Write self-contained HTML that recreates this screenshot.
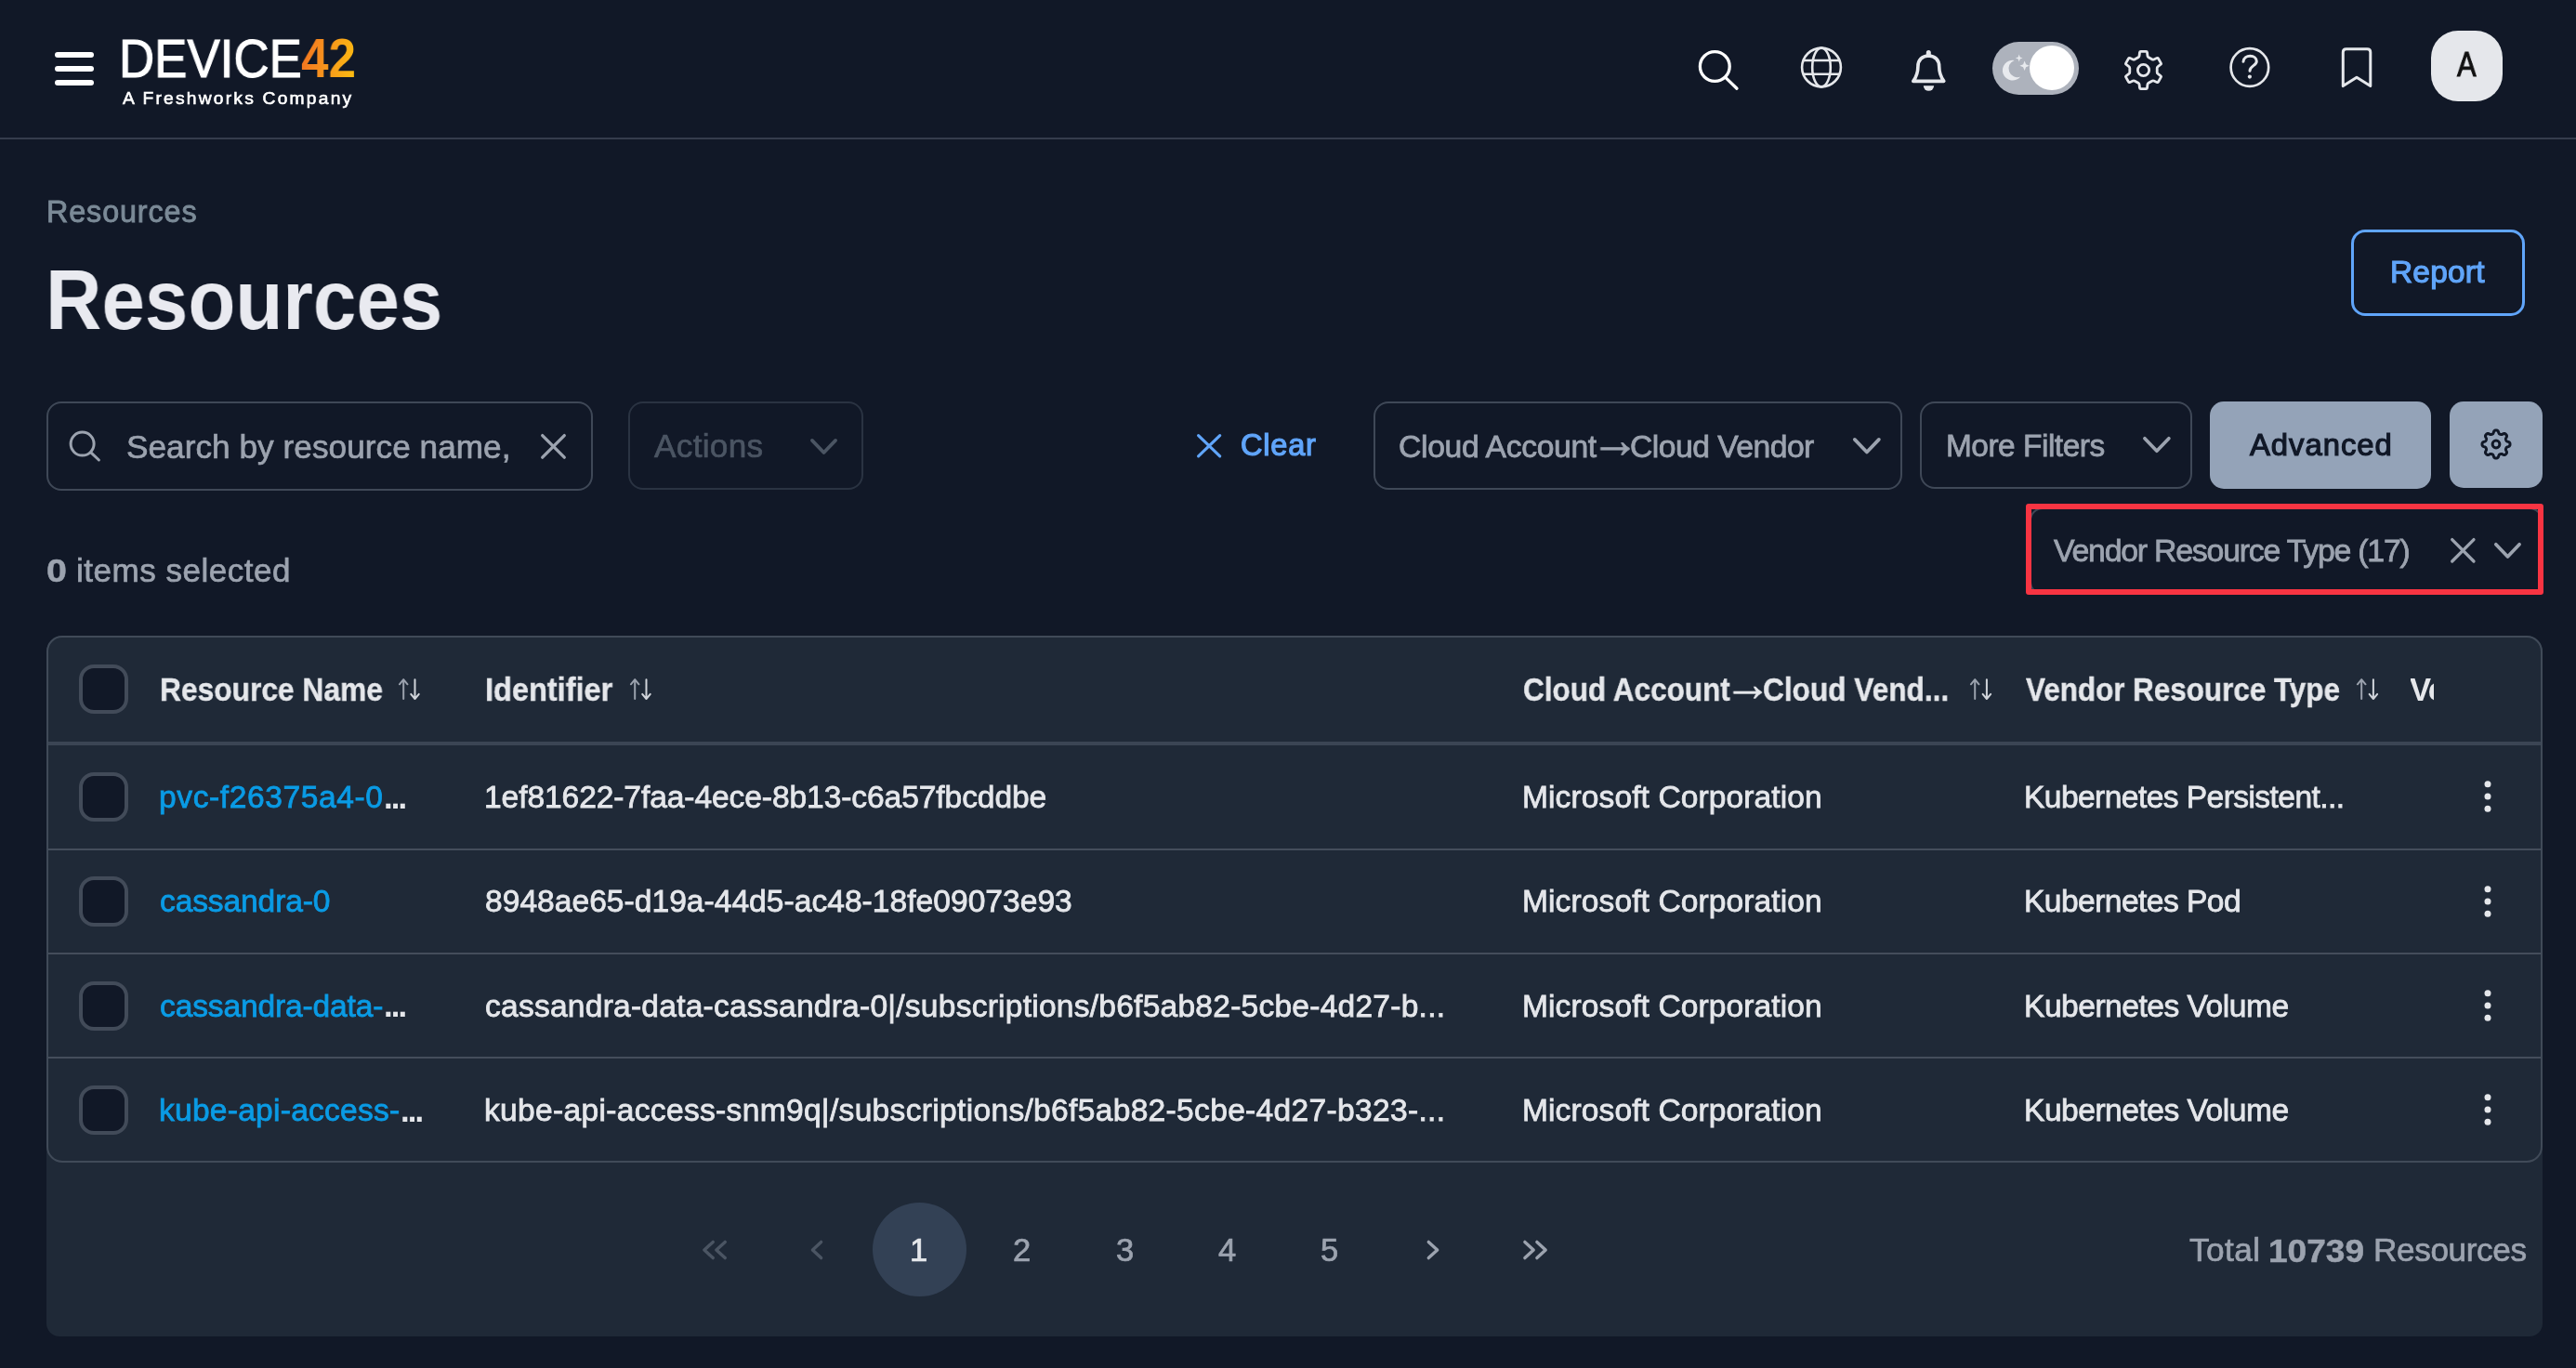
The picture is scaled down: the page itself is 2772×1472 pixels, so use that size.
<!DOCTYPE html>
<html lang="en"><head><meta charset="utf-8"><title>Resources - Device42</title>
<style>
*{box-sizing:border-box;margin:0;padding:0}
html,body{width:2772px;height:1472px;overflow:hidden;background:#111827}
body{position:relative;font-family:"Liberation Sans",Arial,Helvetica,sans-serif;color:#e5e7eb}
span,div,svg,a{position:absolute}
span{white-space:nowrap;display:block;transform-origin:0 50%;will-change:transform}
svg{overflow:visible}
.box{border:2px solid #3f4857;border-radius:16px}
.cb{width:53.2px;height:53.2px;border:4px solid #424b59;border-radius:16px;background:#111827}
.grad{background:linear-gradient(100deg,#f26f21 0%,#f7941d 45%,#fdc010 100%);-webkit-background-clip:text;background-clip:text;color:transparent !important}
.hl{height:2.1px;background:#444d5b;left:52px;width:2682px}
</style></head><body>

<div id="hdr" style="left:0;top:0;width:2772px;height:150px;border-bottom:2px solid #353c4c"></div>
<div style="left:59.2px;top:55.8px;width:41.8px;height:6px;border-radius:3px;background:#fff"></div>
<div style="left:59.2px;top:70.9px;width:41.8px;height:6px;border-radius:3px;background:#fff"></div>
<div style="left:59.2px;top:86.0px;width:41.8px;height:6px;border-radius:3px;background:#fff"></div>
<svg style="left:1820.0px;top:46.0px" width="60.0" height="60.0" viewBox="1820.0 46.0 60.0 60.0" fill="none" stroke="#fff" stroke-width="3.3" stroke-linecap="round"><circle cx="1845.3" cy="71.5" r="15.9"/><path d="M1857 83.6 L1869 95.2"/></svg>
<svg style="left:1930.0px;top:42.0px" width="60.0" height="60.0" viewBox="1930.0 42.0 60.0 60.0" fill="none" stroke="#e5e7eb" stroke-width="2.6"><circle cx="1960" cy="72.5" r="20.9"/><ellipse cx="1960" cy="72.5" rx="9.8" ry="20.9"/><path d="M1940.6 65 H1979.4 M1940.6 79.7 H1979.4"/></svg>
<svg style="left:2050.0px;top:48.0px" width="52.0" height="56.0" viewBox="2050.0 48.0 52.0 56.0" fill="none" stroke="#e5e7eb" stroke-width="3.6" stroke-linejoin="round" stroke-linecap="round"><path d="M2058.8 87.4 C2062.3 82.6 2063.9 78 2063.9 71.5 C2063.9 64.5 2068.5 60 2075.3 60 C2082.1 60 2086.7 64.5 2086.7 71.5 C2086.7 78 2088.3 82.6 2091.8 87.4 Z"/><path d="M2075.3 56.4 V59.5" stroke-width="5"/><path d="M2069.8 92.2 H2081.1 A5.65 5.65 0 0 1 2069.8 92.2 Z" fill="#e5e7eb" stroke="none"/></svg>
<div style="left:2144.3px;top:45.2px;width:92.8px;height:56.8px;border-radius:28.4px;background:#adb2bc"></div>
<div style="left:2184px;top:49px;width:48px;height:48px;border-radius:24px;background:#fff"></div>
<svg style="left:2150.0px;top:56.0px" width="36.0" height="36.0" viewBox="2150.0 56.0 36.0 36.0" fill="#e8eaee"><path d="M2167.6 64.9 A10.9 10.9 0 1 0 2174.2 82.6 A9.4 9.4 0 0 1 2167.6 64.9 Z"/><path d="M2172.7 58.6 l1 2.9 2.9 1 -2.9 1 -1 2.9 -1 -2.9 -2.9 -1 2.9 -1 Z"/><path d="M2178.6 65.5 l1.5 3.7 3.7 1.5 -3.7 1.5 -1.5 3.7 -1.5 -3.7 -3.7 -1.5 3.7 -1.5 Z"/></svg>
<svg style="left:2281.5px;top:51.3px" width="49.0" height="49.0" viewBox="2281.5 51.3 49.0 49.0" fill="none" stroke="#e5e7eb" stroke-width="2.8" stroke-linejoin="round"><path d="M2300.49 61.99 Q2301.47 61.43 2301.59 60.31 L2301.97 56.80 Q2302.09 55.68 2303.22 55.68 L2308.78 55.68 Q2309.91 55.68 2310.03 56.80 L2310.41 60.31 Q2310.53 61.43 2311.51 61.99 L2315.20 64.13 Q2316.18 64.69 2317.21 64.24 L2320.44 62.81 Q2321.47 62.35 2322.04 63.33 L2324.82 68.15 Q2325.38 69.13 2324.47 69.79 L2321.62 71.87 Q2320.71 72.54 2320.71 73.67 L2320.71 77.93 Q2320.71 79.06 2321.62 79.73 L2324.47 81.81 Q2325.38 82.47 2324.82 83.45 L2322.04 88.27 Q2321.47 89.25 2320.44 88.79 L2317.21 87.36 Q2316.18 86.91 2315.20 87.47 L2311.51 89.61 Q2310.53 90.17 2310.41 91.29 L2310.03 94.80 Q2309.91 95.92 2308.78 95.92 L2303.22 95.92 Q2302.09 95.92 2301.97 94.80 L2301.59 91.29 Q2301.47 90.17 2300.49 89.61 L2296.80 87.47 Q2295.82 86.91 2294.79 87.36 L2291.56 88.79 Q2290.53 89.25 2289.96 88.27 L2287.18 83.45 Q2286.62 82.47 2287.53 81.81 L2290.38 79.73 Q2291.29 79.06 2291.29 77.93 L2291.29 73.67 Q2291.29 72.54 2290.38 71.87 L2287.53 69.79 Q2286.62 69.13 2287.18 68.15 L2289.96 63.33 Q2290.53 62.35 2291.56 62.81 L2294.79 64.24 Q2295.82 64.69 2296.80 64.13 Z"/><circle cx="2306" cy="75.8" r="6.15"/></svg>
<svg style="left:2395.0px;top:46.0px" width="52.0" height="52.0" viewBox="2395.0 46.0 52.0 52.0" fill="none" stroke="#e5e7eb" stroke-width="2.7" stroke-linecap="round" stroke-linejoin="round"><circle cx="2420.9" cy="72.5" r="20.3"/><path d="M2414 66.3 C2414.2 62 2418 60.2 2421.3 60.2 C2425.3 60.2 2428.3 62.6 2428.3 66 C2428.3 70.6 2421 70.8 2421 76.3" stroke-width="3"/><circle cx="2420.9" cy="82.6" r="2.1" fill="#e5e7eb" stroke="none"/></svg>
<svg style="left:2514.0px;top:46.0px" width="44.0" height="54.0" viewBox="2514.0 46.0 44.0 54.0" fill="none" stroke="#e5e7eb" stroke-width="3" stroke-linejoin="round"><path d="M2521.3 92.6 V56.3 Q2521.3 52.8 2524.8 52.8 H2547.3 Q2550.8 52.8 2550.8 56.3 V92.6 L2536 83.3 Z"/></svg>
<div style="left:2616px;top:33px;width:77px;height:76px;border-radius:29px;background:#e5e7eb"></div>
<div style="left:2529.8px;top:246.7px;width:187.4px;height:93.5px;border:3px solid #60a5fa;border-radius:15px"></div>
<div class="box" style="left:50px;top:432px;width:588px;height:96.3px"></div>
<svg style="left:70.0px;top:459.0px" width="44.0" height="44.0" viewBox="70.0 459.0 44.0 44.0" fill="none" stroke="#9ca3af" stroke-width="3" stroke-linecap="round"><circle cx="88.6" cy="477.6" r="12.5"/><path d="M97.8 486.8 L106.4 495"/></svg>
<svg style="left:579.1px;top:464.0px" width="32.9" height="32.8" viewBox="579.1 464.0 32.9 32.8" fill="none" stroke="#9ca3af" stroke-width="3.3" stroke-linecap="round"><path d="M583.8 468.6 L607.4 492.2 M607.4 468.6 L583.8 492.2"/></svg>
<div class="box" style="left:676.4px;top:432px;width:252.2px;height:95px;border-color:#2a3342"></div>
<svg style="left:869.0px;top:468.8px" width="35.0" height="22.8" viewBox="869.0 468.8 35.0 22.8" fill="none" stroke="#4b5563" stroke-width="3.7" stroke-linecap="round" stroke-linejoin="round"><path d="M873.9 473.7 L886.5 486.8 L899.1 473.7"/></svg>
<svg style="left:1285.0px;top:463.6px" width="32.3" height="31.4" viewBox="1285.0 463.6 32.3 31.4" fill="none" stroke="#60a5fa" stroke-width="3.2" stroke-linecap="round"><path d="M1289.6 468.2 L1312.7 490.4 M1312.7 468.2 L1289.6 490.4"/></svg>
<div class="box" style="left:1478.3px;top:432.4px;width:568.3px;height:94.7px"></div>
<svg style="left:1990.8px;top:468.1px" width="35.7" height="23.4" viewBox="1990.8 468.1 35.7 23.4" fill="none" stroke="#9ca3af" stroke-width="3.7" stroke-linecap="round" stroke-linejoin="round"><path d="M1995.6 473.0 L2008.7 486.6 L2021.7 473.0"/></svg>
<div class="box" style="left:2066px;top:432px;width:293.1px;height:93.7px"></div>
<svg style="left:2302.9px;top:467.4px" width="35.7" height="23.1" viewBox="2302.9 467.4 35.7 23.1" fill="none" stroke="#9ca3af" stroke-width="3.7" stroke-linecap="round" stroke-linejoin="round"><path d="M2307.8 472.2 L2320.8 485.6 L2333.8 472.2"/></svg>
<div style="left:2377.9px;top:432px;width:238.2px;height:94px;border-radius:15px;background:#94a3b8"></div>
<div style="left:2635.8px;top:432px;width:100.3px;height:93px;border-radius:15px;background:#94a3b8"></div>
<svg style="left:2667.0px;top:459.2px" width="38.0" height="38.0" viewBox="2667.0 459.2 38.0 38.0" fill="none" stroke="#111827" stroke-width="3.0" stroke-linejoin="round"><path d="M2686.00 463.20 L2686.49 463.22 L2686.98 463.30 L2687.45 463.47 L2687.90 463.80 L2688.28 464.36 L2688.59 465.16 L2688.86 465.95 L2689.13 466.54 L2689.43 466.91 L2689.75 467.15 L2690.09 467.33 L2690.44 467.48 L2690.79 467.62 L2691.16 467.73 L2691.56 467.79 L2692.04 467.74 L2692.64 467.52 L2693.39 467.14 L2694.17 466.80 L2694.84 466.68 L2695.39 466.76 L2695.84 466.98 L2696.24 467.26 L2696.61 467.59 L2696.94 467.96 L2697.22 468.36 L2697.44 468.81 L2697.52 469.36 L2697.40 470.03 L2697.06 470.81 L2696.68 471.56 L2696.46 472.16 L2696.41 472.64 L2696.47 473.04 L2696.58 473.41 L2696.72 473.76 L2696.87 474.11 L2697.05 474.45 L2697.29 474.77 L2697.66 475.07 L2698.25 475.34 L2699.04 475.61 L2699.84 475.92 L2700.40 476.30 L2700.73 476.75 L2700.90 477.22 L2700.98 477.71 L2701.00 478.20 L2700.98 478.69 L2700.90 479.18 L2700.73 479.65 L2700.40 480.10 L2699.84 480.48 L2699.04 480.79 L2698.25 481.06 L2697.66 481.33 L2697.29 481.63 L2697.05 481.95 L2696.87 482.29 L2696.72 482.64 L2696.58 482.99 L2696.47 483.36 L2696.41 483.76 L2696.46 484.24 L2696.68 484.84 L2697.06 485.59 L2697.40 486.37 L2697.52 487.04 L2697.44 487.59 L2697.22 488.04 L2696.94 488.44 L2696.61 488.81 L2696.24 489.14 L2695.84 489.42 L2695.39 489.64 L2694.84 489.72 L2694.17 489.60 L2693.39 489.26 L2692.64 488.88 L2692.04 488.66 L2691.56 488.61 L2691.16 488.67 L2690.79 488.78 L2690.44 488.92 L2690.09 489.07 L2689.75 489.25 L2689.43 489.49 L2689.13 489.86 L2688.86 490.45 L2688.59 491.24 L2688.28 492.04 L2687.90 492.60 L2687.45 492.93 L2686.98 493.10 L2686.49 493.18 L2686.00 493.20 L2685.51 493.18 L2685.02 493.10 L2684.55 492.93 L2684.10 492.60 L2683.72 492.04 L2683.41 491.24 L2683.14 490.45 L2682.87 489.86 L2682.57 489.49 L2682.25 489.25 L2681.91 489.07 L2681.56 488.92 L2681.21 488.78 L2680.84 488.67 L2680.44 488.61 L2679.96 488.66 L2679.36 488.88 L2678.61 489.26 L2677.83 489.60 L2677.16 489.72 L2676.61 489.64 L2676.16 489.42 L2675.76 489.14 L2675.39 488.81 L2675.06 488.44 L2674.78 488.04 L2674.56 487.59 L2674.48 487.04 L2674.60 486.37 L2674.94 485.59 L2675.32 484.84 L2675.54 484.24 L2675.59 483.76 L2675.53 483.36 L2675.42 482.99 L2675.28 482.64 L2675.13 482.29 L2674.95 481.95 L2674.71 481.63 L2674.34 481.33 L2673.75 481.06 L2672.96 480.79 L2672.16 480.48 L2671.60 480.10 L2671.27 479.65 L2671.10 479.18 L2671.02 478.69 L2671.00 478.20 L2671.02 477.71 L2671.10 477.22 L2671.27 476.75 L2671.60 476.30 L2672.16 475.92 L2672.96 475.61 L2673.75 475.34 L2674.34 475.07 L2674.71 474.77 L2674.95 474.45 L2675.13 474.11 L2675.28 473.76 L2675.42 473.41 L2675.53 473.04 L2675.59 472.64 L2675.54 472.16 L2675.32 471.56 L2674.94 470.81 L2674.60 470.03 L2674.48 469.36 L2674.56 468.81 L2674.78 468.36 L2675.06 467.96 L2675.39 467.59 L2675.76 467.26 L2676.16 466.98 L2676.61 466.76 L2677.16 466.68 L2677.83 466.80 L2678.61 467.14 L2679.36 467.52 L2679.96 467.74 L2680.44 467.79 L2680.84 467.73 L2681.21 467.62 L2681.56 467.48 L2681.91 467.33 L2682.25 467.15 L2682.57 466.91 L2682.87 466.54 L2683.14 465.95 L2683.41 465.16 L2683.72 464.36 L2684.10 463.80 L2684.55 463.47 L2685.02 463.30 L2685.51 463.22 Z"/><circle cx="2686" cy="478.2" r="3.9"/></svg>
<div class="box" style="left:2184.2px;top:545.6px;width:551.8px;height:94.4px;border-radius:14px"></div>
<div style="left:2180.3px;top:541.8px;width:556.9px;height:98.3px;border:6.4px solid #f83442;border-radius:3px"></div>
<svg style="left:2633.9px;top:576.0px" width="32.7" height="32.6" viewBox="2633.9 576.0 32.7 32.6" fill="none" stroke="#9ca3af" stroke-width="3.3" stroke-linecap="round"><path d="M2638.6 580.6 L2661.9 604.0 M2661.9 580.6 L2638.6 604.0"/></svg>
<svg style="left:2681.2px;top:581.4px" width="35.0" height="22.8" viewBox="2681.2 581.4 35.0 22.8" fill="none" stroke="#9ca3af" stroke-width="3.7" stroke-linecap="round" stroke-linejoin="round"><path d="M2686.0 586.2 L2698.7 599.4 L2711.3 586.2"/></svg>
<div style="left:50px;top:684px;width:2686px;height:753.5px;background:#1f2937;border-radius:17px 17px 14px 14px"></div>
<div style="left:50px;top:684px;width:2686px;height:567px;border:2px solid #404a58;border-radius:17px"></div>
<div style="left:52px;top:798.2px;width:2682px;height:3.8px;background:#3b4554"></div>
<div class="hl" style="top:912.9px"></div>
<div class="hl" style="top:1025.0px"></div>
<div class="hl" style="top:1137.1px"></div>
<div class="cb" style="left:84.9px;top:714.7px"></div>
<div class="cb" style="left:84.9px;top:831.0px"></div>
<div class="cb" style="left:84.9px;top:943.4px"></div>
<div class="cb" style="left:84.9px;top:1055.8px"></div>
<div class="cb" style="left:84.9px;top:1168.2px"></div>
<svg style="left:426.8px;top:728.4px" width="26.7" height="27.2" viewBox="426.8 728.4 26.7 27.2" fill="none" stroke-width="2" stroke-linecap="round" stroke-linejoin="round"><path d="M434.0 752.4 V731.6 M429.7 736.7 L434.0 731.6 L438.3 736.7" stroke="#9aa1ad"/><path d="M446.3 731.6 V752.4 M442.0 747.3 L446.3 752.4 L450.6 747.3" stroke="#d1d5db"/></svg>
<svg style="left:675.6px;top:728.4px" width="26.7" height="27.2" viewBox="675.6 728.4 26.7 27.2" fill="none" stroke-width="2" stroke-linecap="round" stroke-linejoin="round"><path d="M682.8 752.4 V731.6 M678.5 736.7 L682.8 731.6 L687.1 736.7" stroke="#9aa1ad"/><path d="M695.1 731.6 V752.4 M690.8 747.3 L695.1 752.4 L699.4 747.3" stroke="#d1d5db"/></svg>
<svg style="left:2118.3px;top:728.4px" width="27.1" height="27.2" viewBox="2118.3 728.4 27.1 27.2" fill="none" stroke-width="2" stroke-linecap="round" stroke-linejoin="round"><path d="M2125.5 752.4 V731.6 M2121.2 736.7 L2125.5 731.6 L2129.8 736.7" stroke="#9aa1ad"/><path d="M2138.2 731.6 V752.4 M2133.9 747.3 L2138.2 752.4 L2142.5 747.3" stroke="#d1d5db"/></svg>
<svg style="left:2533.7px;top:728.4px" width="27.1" height="27.2" viewBox="2533.7 728.4 27.1 27.2" fill="none" stroke-width="2" stroke-linecap="round" stroke-linejoin="round"><path d="M2540.9 752.4 V731.6 M2536.6 736.7 L2540.9 731.6 L2545.2 736.7" stroke="#9aa1ad"/><path d="M2553.6 731.6 V752.4 M2549.3 747.3 L2553.6 752.4 L2557.9 747.3" stroke="#d1d5db"/></svg>
<svg style="left:2670.7px;top:839.2px" width="12.0" height="36.0" viewBox="2670.7 839.2 12.0 36.0" fill="#e5e7eb"><circle cx="2676.7" cy="843.9" r="3.5"/><circle cx="2676.7" cy="857.2" r="3.5"/><circle cx="2676.7" cy="870.5" r="3.5"/></svg>
<svg style="left:2670.7px;top:951.5px" width="12.0" height="36.0" viewBox="2670.7 951.5 12.0 36.0" fill="#e5e7eb"><circle cx="2676.7" cy="956.2" r="3.5"/><circle cx="2676.7" cy="969.5" r="3.5"/><circle cx="2676.7" cy="982.8" r="3.5"/></svg>
<svg style="left:2670.7px;top:1063.8px" width="12.0" height="36.0" viewBox="2670.7 1063.8 12.0 36.0" fill="#e5e7eb"><circle cx="2676.7" cy="1068.5" r="3.5"/><circle cx="2676.7" cy="1081.8" r="3.5"/><circle cx="2676.7" cy="1095.1" r="3.5"/></svg>
<svg style="left:2670.7px;top:1176.1px" width="12.0" height="36.0" viewBox="2670.7 1176.1 12.0 36.0" fill="#e5e7eb"><circle cx="2676.7" cy="1180.8" r="3.5"/><circle cx="2676.7" cy="1194.1" r="3.5"/><circle cx="2676.7" cy="1207.4" r="3.5"/></svg>
<div style="left:2594px;top:715px;width:25px;height:52px;overflow:hidden"><span style="left:-1.2px;top:9.7px;font-size:34.6px;line-height:34.6px;font-weight:700;color:#e5e7eb;letter-spacing:-1.4px">Vendor</span></div>
<div style="left:938.7px;top:1293.7px;width:101px;height:101px;border-radius:50%;background:#334155"></div>
<svg style="left:748.6px;top:1328.8px" width="40.0" height="32.0" viewBox="748.6 1328.8 40.0 32.0" fill="none" stroke="#4b5563" stroke-width="3.4" stroke-linecap="round" stroke-linejoin="round"><path d="M766.8 1336.2 L757.5 1344.8 L766.8 1353.4 M779.8 1336.2 L770.5 1344.8 L779.8 1353.4"/></svg>
<svg style="left:858.6px;top:1328.8px" width="40.0" height="32.0" viewBox="858.6 1328.8 40.0 32.0" fill="none" stroke="#4b5563" stroke-width="3.4" stroke-linecap="round" stroke-linejoin="round"><path d="M883.2 1336.2 L874.0 1344.8 L883.2 1353.4"/></svg>
<svg style="left:1521.8px;top:1328.8px" width="40.0" height="32.0" viewBox="1521.8 1328.8 40.0 32.0" fill="none" stroke="#9ca3af" stroke-width="3.4" stroke-linecap="round" stroke-linejoin="round"><path d="M1537.1 1336.2 L1546.5 1344.8 L1537.1 1353.4"/></svg>
<svg style="left:1631.9px;top:1328.8px" width="40.0" height="32.0" viewBox="1631.9 1328.8 40.0 32.0" fill="none" stroke="#9ca3af" stroke-width="3.4" stroke-linecap="round" stroke-linejoin="round"><path d="M1640.8 1336.2 L1650.1 1344.8 L1640.8 1353.4 M1653.8 1336.2 L1663.1 1344.8 L1653.8 1353.4"/></svg>
<span style="left:127.85px;top:34.76px;font-size:57.16px;line-height:57.16px;color:#ffffff;-webkit-text-stroke:1.1px;transform:scaleX(0.9246);">DEVICE</span>
<span class="grad" style="left:323.60px;top:34.00px;font-size:58.71px;line-height:58.71px;color:#f7941d;font-weight:700;transform:scaleX(0.9018);">42</span>
<span style="left:132.10px;top:96.11px;font-size:19.24px;line-height:19.24px;color:#ffffff;letter-spacing:2.210px;-webkit-text-stroke:0.6px;">A Freshworks Company</span>
<span style="left:2643.70px;top:51.95px;font-size:36.8px;line-height:36.8px;color:#111111;-webkit-text-stroke:1.0px;transform:scaleX(0.8400);">A</span>
<span style="left:49.65px;top:212.21px;font-size:32.3px;line-height:32.3px;color:#7b8a97;letter-spacing:0.897px;-webkit-text-stroke:0.9px;">Resources</span>
<span style="left:48.96px;top:278.02px;font-size:90.59px;line-height:90.59px;color:#e9eaf0;font-weight:700;transform:scaleX(0.9226);">Resources</span>
<span style="left:2572.30px;top:276.30px;font-size:33.43px;line-height:33.43px;color:#60a5fa;letter-spacing:0.234px;-webkit-text-stroke:1.2px;">Report</span>
<span style="left:135.95px;top:463.05px;font-size:35.2px;line-height:35.2px;color:#9ca3af;letter-spacing:0.035px;-webkit-text-stroke:0.7px;">Search by resource name,</span>
<span style="left:704.15px;top:462.05px;font-size:35.2px;line-height:35.2px;color:#4b5563;letter-spacing:0.301px;-webkit-text-stroke:0.7px;">Actions</span>
<span style="left:1335.10px;top:463.22px;font-size:32.58px;line-height:32.58px;color:#60a5fa;letter-spacing:0.775px;-webkit-text-stroke:1.2px;">Clear</span>
<span style="left:1504.90px;top:463.86px;font-size:33.71px;line-height:33.71px;color:#9ca3af;letter-spacing:-0.345px;-webkit-text-stroke:0.8px;">Cloud Account</span>
<span style="left:1711.77px;top:446.24px;font-size:55px;line-height:55px;color:#9ca3af;-webkit-text-stroke:0.8px;transform:scaleX(0.9485);">→</span>
<span style="left:1754.30px;top:463.86px;font-size:33.71px;line-height:33.71px;color:#9ca3af;letter-spacing:-0.538px;-webkit-text-stroke:0.8px;">Cloud Vendor</span>
<span style="left:2093.50px;top:463.10px;font-size:33.43px;line-height:33.43px;color:#9ca3af;letter-spacing:-0.482px;-webkit-text-stroke:0.8px;">More Filters</span>
<span style="left:2421.40px;top:463.28px;font-size:32.87px;line-height:32.87px;color:#111827;letter-spacing:0.946px;-webkit-text-stroke:1.2px;">Advanced</span>
<span style="left:2210.20px;top:576.35px;font-size:33.85px;line-height:33.85px;color:#9ca3af;letter-spacing:-1.222px;-webkit-text-stroke:0.8px;">Vendor Resource Type (17)</span>
<span style="left:49.94px;top:597.28px;font-size:35.4px;line-height:35.4px;color:#9ca3af;font-weight:700;-webkit-text-stroke:0.5px;transform:scaleX(1.1111);">0</span>
<span style="left:81.95px;top:596.02px;font-size:35.0px;line-height:35.0px;color:#9ca3af;letter-spacing:0.528px;-webkit-text-stroke:0.7px;">items selected</span>
<span style="left:171.56px;top:724.91px;font-size:34.6px;line-height:34.6px;color:#e5e7eb;font-weight:700;-webkit-text-stroke:0.4px;transform:scaleX(0.9176);">Resource Name</span>
<span style="left:522.42px;top:724.91px;font-size:34.6px;line-height:34.6px;color:#e5e7eb;font-weight:700;-webkit-text-stroke:0.4px;transform:scaleX(0.9404);">Identifier</span>
<span style="left:1638.59px;top:724.91px;font-size:34.6px;line-height:34.6px;color:#e5e7eb;font-weight:700;-webkit-text-stroke:0.4px;transform:scaleX(0.9110);">Cloud Account</span>
<span style="left:1854.93px;top:709.91px;font-size:52.5px;line-height:52.5px;color:#e5e7eb;-webkit-text-stroke:0.5px;transform:scaleX(0.9719);">→</span>
<span style="left:1897.29px;top:724.91px;font-size:34.6px;line-height:34.6px;color:#e5e7eb;font-weight:700;-webkit-text-stroke:0.4px;transform:scaleX(0.9141);">Cloud Vend...</span>
<span style="left:2179.80px;top:724.91px;font-size:34.6px;line-height:34.6px;color:#e5e7eb;font-weight:700;-webkit-text-stroke:0.4px;transform:scaleX(0.9080);">Vendor Resource Type</span>
<span style="left:171.00px;top:841.18px;font-size:33.57px;line-height:33.57px;color:#0a9be5;letter-spacing:0.595px;-webkit-text-stroke:0.8px;">pvc-f26375a4-0</span>
<span style="left:413.30px;top:840.63px;font-size:34.69px;line-height:34.69px;color:#e5e7eb;font-weight:700;letter-spacing:-1.883px;">...</span>
<span style="left:521.20px;top:841.18px;font-size:33.57px;line-height:33.57px;color:#e5e7eb;letter-spacing:-0.088px;-webkit-text-stroke:0.8px;">1ef81622-7faa-4ece-8b13-c6a57fbcddbe</span>
<span style="left:1637.80px;top:841.18px;font-size:33.57px;line-height:33.57px;color:#e5e7eb;letter-spacing:0.097px;-webkit-text-stroke:0.8px;">Microsoft Corporation</span>
<span style="left:2177.70px;top:841.18px;font-size:33.57px;line-height:33.57px;color:#e5e7eb;letter-spacing:-0.568px;-webkit-text-stroke:0.8px;">Kubernetes Persistent...</span>
<span style="left:172.00px;top:953.48px;font-size:33.57px;line-height:33.57px;color:#0a9be5;letter-spacing:-0.123px;-webkit-text-stroke:0.8px;">cassandra-0</span>
<span style="left:522.20px;top:953.48px;font-size:33.57px;line-height:33.57px;color:#e5e7eb;letter-spacing:0.028px;-webkit-text-stroke:0.8px;">8948ae65-d19a-44d5-ac48-18fe09073e93</span>
<span style="left:1637.80px;top:953.48px;font-size:33.57px;line-height:33.57px;color:#e5e7eb;letter-spacing:0.097px;-webkit-text-stroke:0.8px;">Microsoft Corporation</span>
<span style="left:2177.70px;top:953.48px;font-size:33.57px;line-height:33.57px;color:#e5e7eb;letter-spacing:-0.549px;-webkit-text-stroke:0.8px;">Kubernetes Pod</span>
<span style="left:172.00px;top:1065.78px;font-size:33.57px;line-height:33.57px;color:#0a9be5;letter-spacing:-0.146px;-webkit-text-stroke:0.8px;">cassandra-data-</span>
<span style="left:413.30px;top:1065.23px;font-size:34.69px;line-height:34.69px;color:#e5e7eb;font-weight:700;letter-spacing:-1.883px;">...</span>
<span style="left:522.20px;top:1065.78px;font-size:33.57px;line-height:33.57px;color:#e5e7eb;letter-spacing:0.234px;-webkit-text-stroke:0.8px;">cassandra-data-cassandra-0|/subscriptions/b6f5ab82-5cbe-4d27-b...</span>
<span style="left:1637.80px;top:1065.78px;font-size:33.57px;line-height:33.57px;color:#e5e7eb;letter-spacing:0.097px;-webkit-text-stroke:0.8px;">Microsoft Corporation</span>
<span style="left:2177.70px;top:1065.78px;font-size:33.57px;line-height:33.57px;color:#e5e7eb;letter-spacing:-0.492px;-webkit-text-stroke:0.8px;">Kubernetes Volume</span>
<span style="left:171.00px;top:1178.08px;font-size:33.57px;line-height:33.57px;color:#0a9be5;letter-spacing:0.248px;-webkit-text-stroke:0.8px;">kube-api-access-</span>
<span style="left:430.50px;top:1177.53px;font-size:34.69px;line-height:34.69px;color:#e5e7eb;font-weight:700;letter-spacing:-1.883px;">...</span>
<span style="left:521.20px;top:1178.08px;font-size:33.57px;line-height:33.57px;color:#e5e7eb;letter-spacing:0.313px;-webkit-text-stroke:0.8px;">kube-api-access-snm9q|/subscriptions/b6f5ab82-5cbe-4d27-b323-...</span>
<span style="left:1637.80px;top:1178.08px;font-size:33.57px;line-height:33.57px;color:#e5e7eb;letter-spacing:0.097px;-webkit-text-stroke:0.8px;">Microsoft Corporation</span>
<span style="left:2177.70px;top:1178.08px;font-size:33.57px;line-height:33.57px;color:#e5e7eb;letter-spacing:-0.492px;-webkit-text-stroke:0.8px;">Kubernetes Volume</span>
<span style="left:979.00px;top:1327.56px;font-size:34.6px;line-height:34.6px;color:#e5e7eb;-webkit-text-stroke:0.7px;">1</span>
<span style="left:1090.40px;top:1327.56px;font-size:34.6px;line-height:34.6px;color:#9ca3af;-webkit-text-stroke:0.7px;">2</span>
<span style="left:1200.50px;top:1327.56px;font-size:34.6px;line-height:34.6px;color:#9ca3af;-webkit-text-stroke:0.7px;">3</span>
<span style="left:1311.00px;top:1327.56px;font-size:34.6px;line-height:34.6px;color:#9ca3af;-webkit-text-stroke:0.7px;">4</span>
<span style="left:1421.40px;top:1327.56px;font-size:34.6px;line-height:34.6px;color:#9ca3af;-webkit-text-stroke:0.7px;">5</span>
<span style="left:2355.85px;top:1327.25px;font-size:35.2px;line-height:35.2px;color:#9ca3af;letter-spacing:0.448px;-webkit-text-stroke:0.7px;">Total</span>
<span style="left:2440.94px;top:1328.25px;font-size:35.2px;line-height:35.2px;color:#9ca3af;font-weight:700;-webkit-text-stroke:0.5px;transform:scaleX(1.0538);">10739</span>
<span style="left:2553.95px;top:1327.25px;font-size:35.2px;line-height:35.2px;color:#9ca3af;letter-spacing:-0.399px;-webkit-text-stroke:0.7px;">Resources</span>

</body></html>
